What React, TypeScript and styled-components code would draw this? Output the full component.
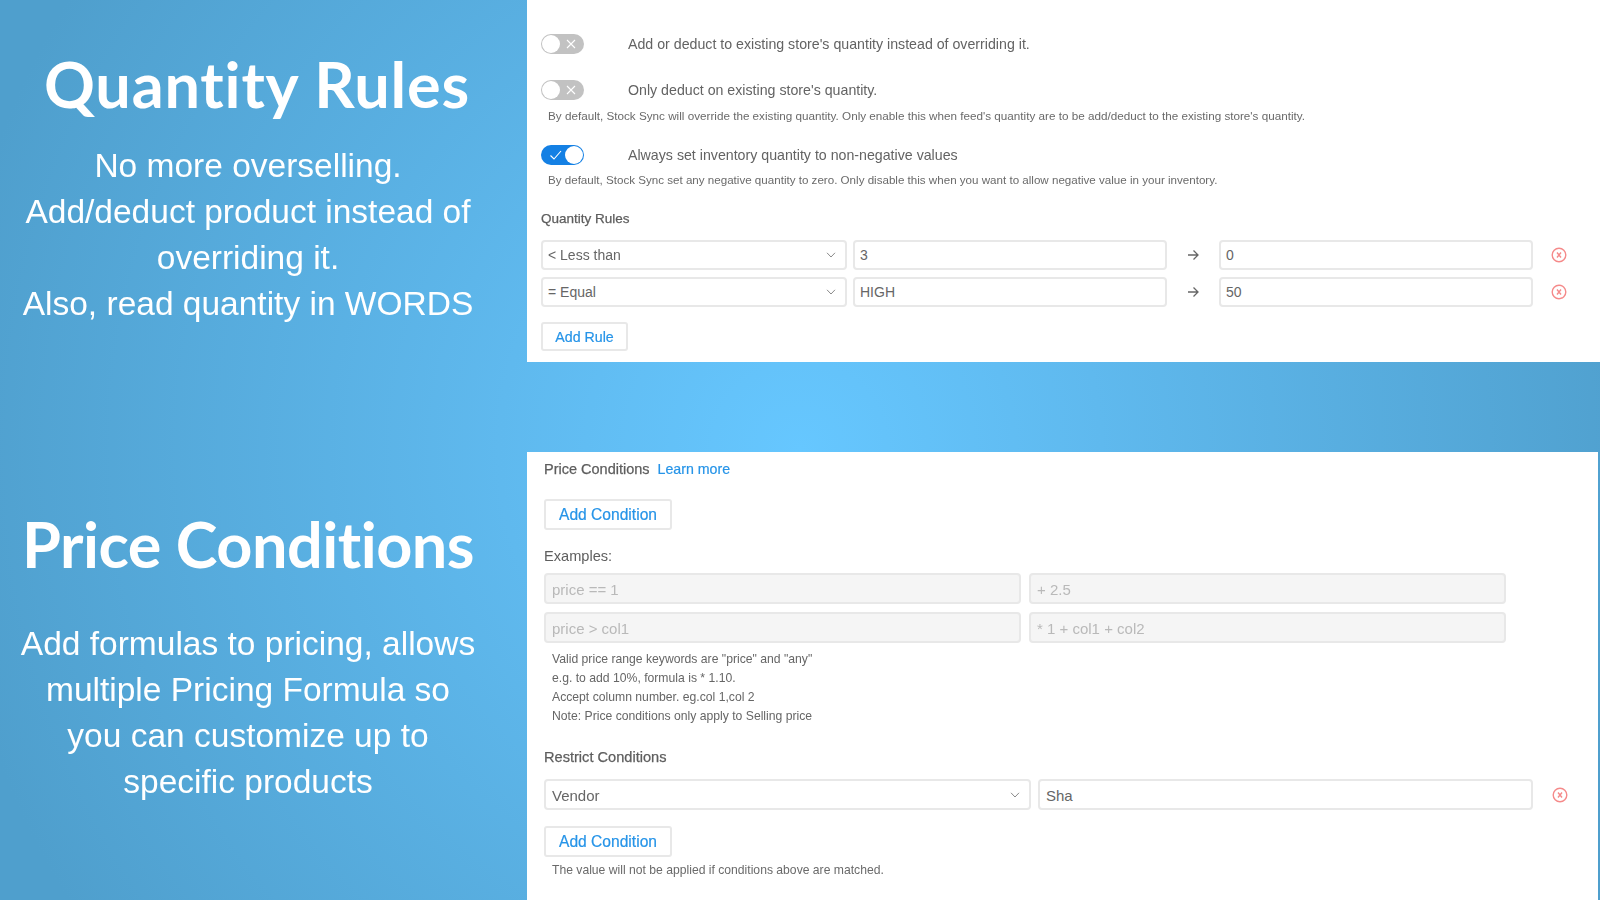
import React from "react";
import styled, { createGlobalStyle } from "styled-components";

const Global = createGlobalStyle`
  html, body { margin: 0; padding: 0; }
  body { font-family: "Liberation Sans", Arial, sans-serif; }
`;

const Page = styled.div`
  width: 1600px;
  height: 900px;
  overflow: hidden;
  display: grid;
  grid-template-columns: 527px 1fr;
  filter: blur(0.35px);
  background: radial-gradient(circle 860px at 800px 450px, #66c7ff 0%, #5fb9ee 35%, #4f9fcd 100%);
`;
const LeftCol = styled.div`
  display: flex;
  flex-direction: column;
  padding-right: 31px;
`;
const Promo = styled.section<{ $top: number; $gap: number; $h: number }>`
  height: ${(p) => p.$h}px;
  padding-top: ${(p) => p.$top}px;
  box-sizing: border-box;
  color: #fff;
  text-align: center;
  --gap: ${(p) => p.$gap}px;
`;
const Title = styled.h1<{ $spacing: number; $shift: number }>`
  margin: 0 0 var(--gap);
  padding-left: ${(p) => p.$shift}px;
  font-family: Lato, sans-serif;
  font-weight: 700;
  font-size: 63px;
  line-height: 80px;
  letter-spacing: ${(p) => p.$spacing}px;
  font-variant-ligatures: none;
  white-space: nowrap;
`;
const PromoText = styled.p`
  margin: 0;
  font-size: 33.5px;
  line-height: 46px;
  font-weight: 400;
  white-space: nowrap;
`;
const RightCol = styled.div`
  display: flex;
  flex-direction: column;
`;
const Panel = styled.section<{ $h: number; $mt?: number; $mr?: number; $pl: number; $pt: number }>`
  height: ${(p) => p.$h}px;
  margin-top: ${(p) => p.$mt ?? 0}px;
  margin-right: ${(p) => p.$mr ?? 0}px;
  padding: ${(p) => p.$pt}px 0 0 ${(p) => p.$pl}px;
  box-sizing: border-box;
  background: #fff;
  color: #666;
`;
const ToggleRow = styled.div<{ $mt?: number }>`
  display: flex;
  align-items: center;
  height: 20px;
  gap: 44px;
  margin-top: ${(p) => p.$mt ?? 0}px;
  font-size: 14.2px;
  line-height: 20px;
  color: #636363;
`;
const Switch = styled.span<{ $on?: boolean }>`
  position: relative;
  display: block;
  width: 43px;
  height: 20px;
  border-radius: 10px;
  box-sizing: border-box;
  background: ${(p) => (p.$on ? "#1480e4" : "#c2c2c2")};
  svg { position: absolute; top: 4px; left: ${(p) => (p.$on ? "8px" : "24px")}; }
  &::after {
    content: "";
    position: absolute;
    top: 1px;
    left: ${(p) => (p.$on ? "24px" : "1px")};
    width: 18px;
    height: 18px;
    border-radius: 50%;
    background: #fff;
    box-sizing: border-box;
  }
`;
const Help = styled.div<{ $mt: number; $ml: number; $fs: number }>`
  margin: ${(p) => p.$mt}px 0 0 ${(p) => p.$ml}px;
  font-size: ${(p) => p.$fs}px;
  line-height: 16px;
  color: #6a6a6a;
  white-space: nowrap;
`;
const Heading = styled.div<{ $mt: number; $fs: number; $plain?: boolean }>`
  margin-top: ${(p) => p.$mt}px;
  font-size: ${(p) => p.$fs}px;
  line-height: 20px;
  color: #5e5e5e;
  -webkit-text-stroke: ${(p) => (p.$plain ? "0" : "0.25px #5e5e5e")};
`;
const FieldRow = styled.div<{ $mt?: number }>`
  display: flex;
  align-items: center;
  margin-top: ${(p) => p.$mt ?? 0}px;
`;
const Field = styled.div<{ $w: number; $h: number; $disabled?: boolean; $ml?: number; $fs?: number }>`
  display: flex;
  align-items: center;
  justify-content: space-between;
  width: ${(p) => p.$w}px;
  height: ${(p) => p.$h}px;
  margin-left: ${(p) => p.$ml ?? 0}px;
  padding: ${(p) => (p.$fs ? "1px" : "0")} 9px 0 ${(p) => (p.$fs ? "6px" : "5px")};
  box-sizing: border-box;
  border: 2px solid #e8e8e8;
  border-radius: 4px;
  background: ${(p) => (p.$disabled ? "#f5f5f5" : "#fff")};
  color: ${(p) => (p.$disabled ? "#b9b9b9" : "#666")};
  font-size: ${(p) => p.$fs ?? 14}px;
`;
const Button = styled.div<{ $w: number; $h: number; $mt: number; $fs: number }>`
  display: flex;
  align-items: center;
  justify-content: center;
  width: ${(p) => p.$w}px;
  height: ${(p) => p.$h}px;
  margin-top: ${(p) => p.$mt}px;
  box-sizing: border-box;
  border: 2px solid #e8e8e8;
  border-radius: 3px;
  background: #fff;
  color: #2694e8;
  font-size: ${(p) => p.$fs}px;
  -webkit-text-stroke: 0.2px #2694e8;
`;
const LearnMore = styled.span`
  margin-left: 8px;
  font-size: 14.2px;
  color: #2694e8;
  -webkit-text-stroke: 0.2px #2694e8;
`;
const HelpLines = styled.div`
  margin: 7px 0 0 8px;
  font-size: 12.2px;
  line-height: 19px;
  color: #666;
  div { white-space: nowrap; }
`;
const ArrowSlot = styled.span<{ $w: number }>`
  display: flex;
  justify-content: center;
  width: ${(p) => p.$w}px;
`;
const RemoveSlot = styled.span<{ $ml: number }>`
  display: flex;
  margin-left: ${(p) => p.$ml}px;
`;

const Chevron = () => (
  <svg width="10" height="6" viewBox="0 0 10 6" fill="none" stroke="#8a8a8a" strokeWidth="1">
    <path d="M1 .8 5 5l4-4.200" />
  </svg>
);
const Arrow = () => (
  <svg width="12" height="12" viewBox="0 0 12 12" fill="none" stroke="#666" strokeWidth="1.300">
    <path d="M1 6h10M6.500 1.500 11 6l-4.500 4.500" />
  </svg>
);
const Remove = () => (
  <svg width="16" height="16" viewBox="0 0 16 16" fill="none" stroke="#f58a8a" strokeWidth="1.400">
    <circle cx="8" cy="8" r="6.800" />
    <path d="M6 5.500l4 5M10 5.500l-4 5" />
  </svg>
);
const Cross = () => (
  <svg width="12" height="12" viewBox="0 0 12 12" fill="none" stroke="#fff" strokeWidth="1.100">
    <path d="M2 2l8 8M10 2l-8 8" />
  </svg>
);
const Check = () => (
  <svg width="14" height="12" viewBox="0 0 14 12" fill="none" stroke="#fff" strokeWidth="1.100">
    <path d="M1.500 6.500 5 10l7-8" />
  </svg>
);

export default function App() {
  return (
    <>
      <Global />
      <Page>
        <LeftCol>
          <Promo $top={44} $gap={19} $h={452}>
            <Title $spacing={0.8} $shift={18}>Quantity Rules</Title>
            <PromoText>
              No more overselling.
              <br />
              Add/deduct product instead of
              <br />
              overriding it.
              <br />
              Also, read quantity in WORDS
            </PromoText>
          </Promo>
          <Promo $top={52} $gap={37} $h={448}>
            <Title $spacing={-0.5} $shift={0}>Price Conditions</Title>
            <PromoText>
              Add formulas to pricing, allows
              <br />
              multiple Pricing Formula so
              <br />
              you can customize up to
              <br />
              specific products
            </PromoText>
          </Promo>
        </LeftCol>
        <RightCol>
          <Panel $h={362} $pl={14} $pt={34}>
            <ToggleRow>
              <Switch><Cross /></Switch>
              Add or deduct to existing store's quantity instead of overriding it.
            </ToggleRow>
            <ToggleRow $mt={26}>
              <Switch><Cross /></Switch>
              Only deduct on existing store's quantity.
            </ToggleRow>
            <Help $mt={8} $ml={7} $fs={11.7}>
              By default, Stock Sync will override the existing quantity. Only enable this when feed's quantity are to be add/deduct to the existing store's quantity.
            </Help>
            <ToggleRow $mt={21}>
              <Switch $on><Check /></Switch>
              Always set inventory quantity to non-negative values
            </ToggleRow>
            <Help $mt={7} $ml={7} $fs={11.6}>
              By default, Stock Sync set any negative quantity to zero. Only disable this when you want to allow negative value in your inventory.
            </Help>
            <Heading $mt={21} $fs={13.5}>Quantity Rules</Heading>
            <FieldRow $mt={11}>
              <Field $w={306} $h={30}>&lt; Less than<Chevron /></Field>
              <Field $w={314} $h={30} $ml={6}>3</Field>
              <ArrowSlot $w={52}><Arrow /></ArrowSlot>
              <Field $w={314} $h={30}>0</Field>
              <RemoveSlot $ml={18}><Remove /></RemoveSlot>
            </FieldRow>
            <FieldRow $mt={7}>
              <Field $w={306} $h={30}>= Equal<Chevron /></Field>
              <Field $w={314} $h={30} $ml={6}>HIGH</Field>
              <ArrowSlot $w={52}><Arrow /></ArrowSlot>
              <Field $w={314} $h={30}>50</Field>
              <RemoveSlot $ml={18}><Remove /></RemoveSlot>
            </FieldRow>
            <Button $w={87} $h={29} $mt={15} $fs={14.2}>Add Rule</Button>
          </Panel>
          <Panel $h={448} $mt={90} $mr={2} $pl={17} $pt={7}>
            <Heading $mt={0} $fs={14.5}>
              Price Conditions<LearnMore>Learn more</LearnMore>
            </Heading>
            <Button $w={128} $h={31} $mt={20} $fs={15.6}>Add Condition</Button>
            <Heading $mt={16} $fs={14.6} $plain>Examples:</Heading>
            <FieldRow $mt={7}>
              <Field $w={477} $h={31} $disabled $fs={15}>price == 1</Field>
              <Field $w={477} $h={31} $disabled $ml={8} $fs={15}>+ 2.5</Field>
            </FieldRow>
            <FieldRow $mt={8}>
              <Field $w={477} $h={31} $disabled $fs={15}>price &gt; col1</Field>
              <Field $w={477} $h={31} $disabled $ml={8} $fs={15}>* 1 + col1 + col2</Field>
            </FieldRow>
            <HelpLines>
              <div>Valid price range keywords are "price" and "any"</div>
              <div>e.g. to add 10%, formula is * 1.10.</div>
              <div>Accept column number. eg.col 1,col 2</div>
              <div>Note: Price conditions only apply to Selling price</div>
            </HelpLines>
            <Heading $mt={21} $fs={14.6}>Restrict Conditions</Heading>
            <FieldRow $mt={12}>
              <Field $w={487} $h={31} $fs={15}>Vendor<Chevron /></Field>
              <Field $w={495} $h={31} $ml={7} $fs={15}>Sha</Field>
              <RemoveSlot $ml={19}><Remove /></RemoveSlot>
            </FieldRow>
            <Button $w={128} $h={31} $mt={16} $fs={15.6}>Add Condition</Button>
            <Help $mt={5} $ml={8} $fs={12.17}>The value will not be applied if conditions above are matched.</Help>
          </Panel>
        </RightCol>
      </Page>
    </>
  );
}
